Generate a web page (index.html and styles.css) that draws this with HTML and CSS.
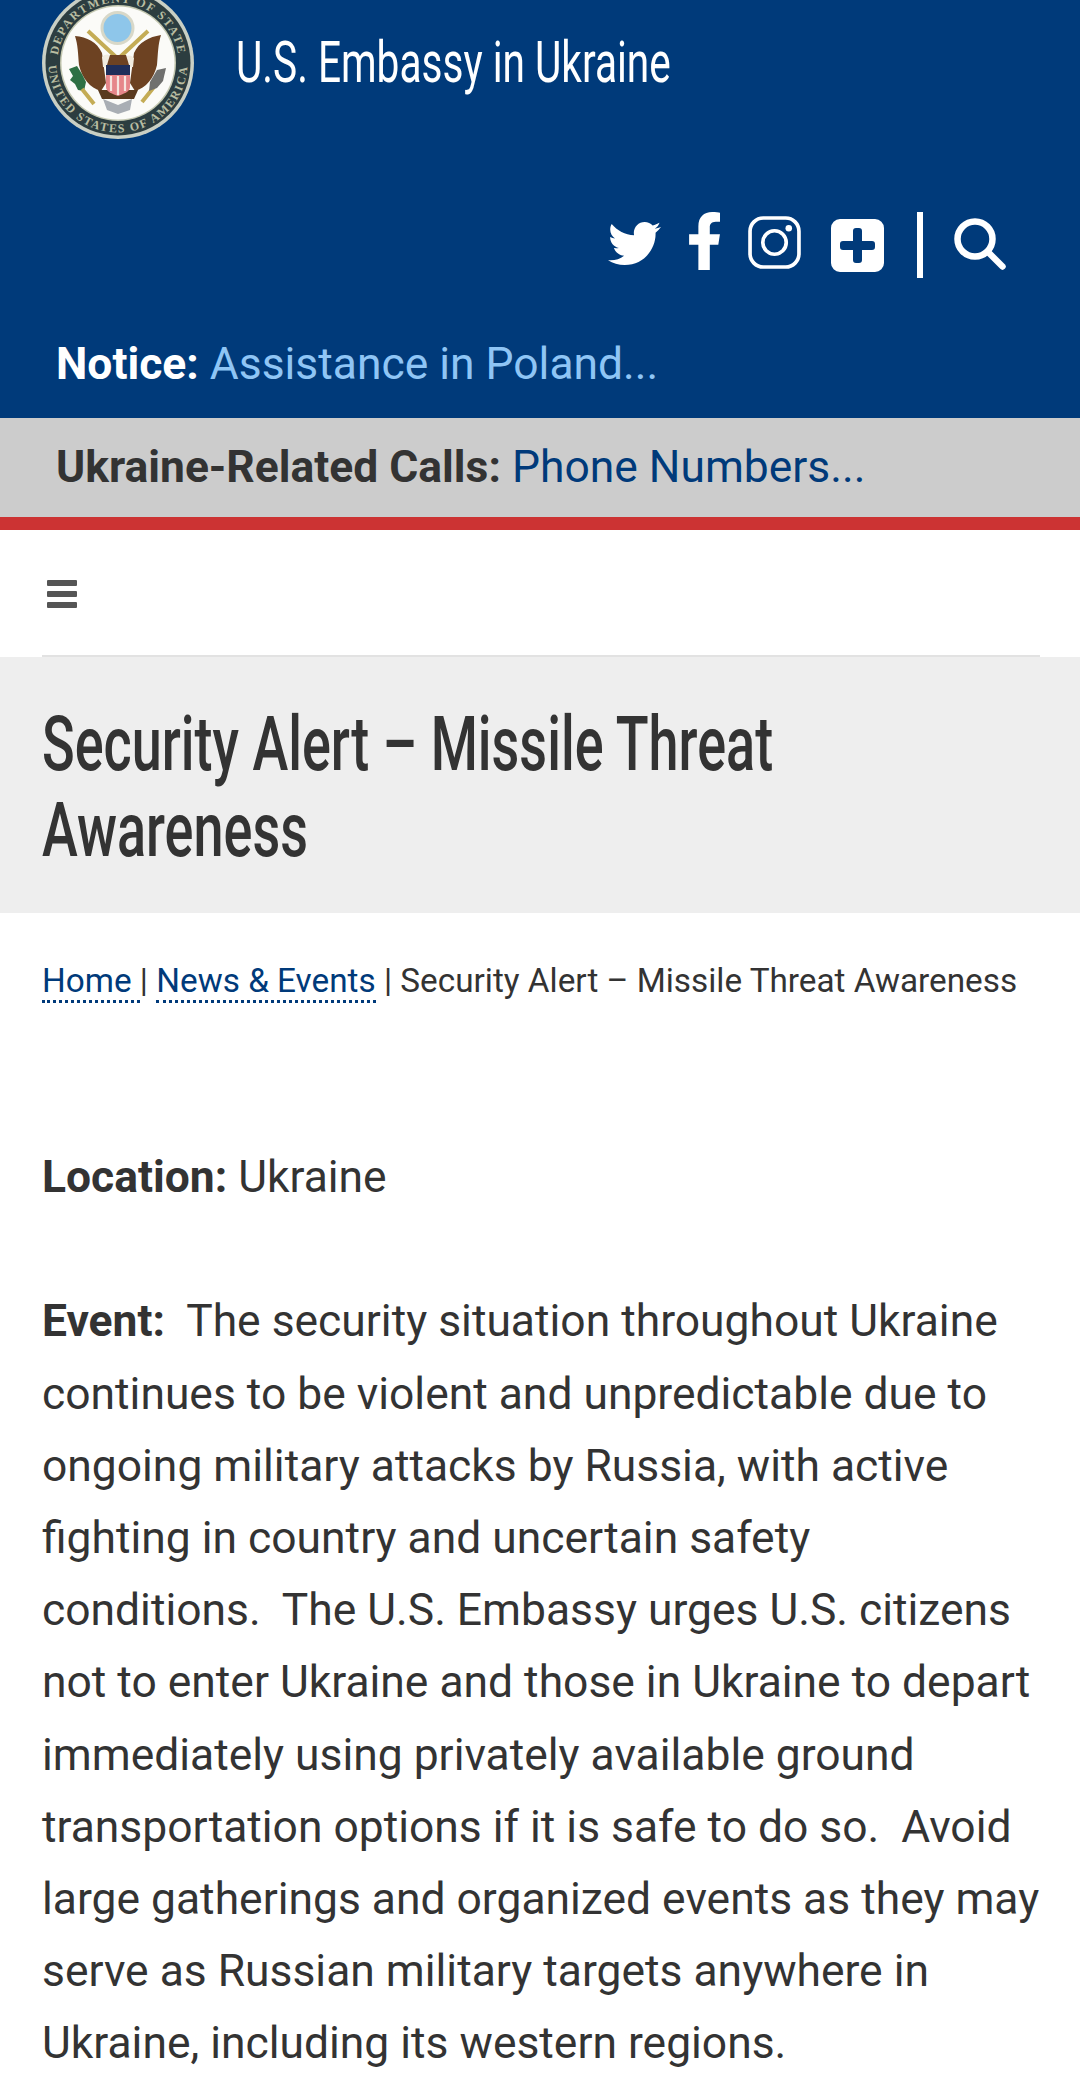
FILE: index.html
```html
<!DOCTYPE html>
<html lang="en">
<head>
<meta charset="utf-8">
<title>Security Alert – Missile Threat Awareness</title>
<link rel="stylesheet" href="styles.css">
</head>
<body>
<header class="site-header">
  <div class="brand">
    <svg class="seal" viewBox="0 0 152 152" aria-hidden="true">
      <defs>
        <path id="arcTop" d="M15.5 76 A60.5 60.5 0 0 1 136.5 76"/>
        <path id="arcBottom" d="M6.5 76 A69.5 69.5 0 0 0 145.5 76"/>
      </defs>
      <circle cx="76" cy="76" r="76" fill="#c9cfc4"/>
      <circle cx="76" cy="76" r="72.5" fill="#2c3d40"/>
      <circle cx="76" cy="76" r="58" fill="#c4c8b0"/>
      <circle cx="76" cy="76" r="56.5" fill="#fbfbf8"/>
      <text class="seal-text"><textPath href="#arcTop" startOffset="50%" text-anchor="middle">DEPARTMENT OF STATE</textPath></text>
      <text class="seal-text"><textPath href="#arcBottom" startOffset="50%" text-anchor="middle">UNITED STATES OF AMERICA</textPath></text>
      <circle cx="75.5" cy="41" r="15.5" fill="#8ec6ea" stroke="#d8d8c8" stroke-width="3"/>
      <path class="gold" d="M46 44l28 26M106 44L78 70"/>
      <path fill="#6d4222" d="M33 49c12 1 22 6 27 17l4 30-5 8c-11-3-19-13-22-26-1-11-1-20-4-29z"/>
      <path fill="#6d4222" d="M119 48c-12 2-22 7-27 18l-4 30 5 8c11-3 19-13 22-26 1-11 1-21 4-30z"/>
      <path fill="#5a3a1e" d="M56 103h40l-4 9H60z"/>
      <path fill="#f1ece0" d="M60 70c4-4 8-3 10 2l-3 8h-6zM92 71c-4-4-8-3-10 2l3 7h6z"/>
      <path fill="#6d4222" d="M68 68h16l3 10H65z"/>
      <path fill="#1f2e5a" d="M64 78h24v10H64z"/>
      <path fill="#e6868a" d="M64 88h24v12c0 5-7 7-12 9-5-2-12-4-12-9z"/>
      <path d="M69 89v15M76 89v19M83 89v15" stroke="#f6e4df" stroke-width="2.2"/>
      <path fill="#2e7044" d="M27 82l8-3 5 8 4 8-2 9-6-1-3-6-5-4 3-4z"/>
      <path class="gold" d="M40 102l12 15M112 100l-12 15"/>
      <path fill="#70706e" d="M124 81l-3 13-6 7-8 3 1-9 7-12z"/>
      <path fill="#a9aeb4" d="M61 112l15 6 14-6-2 11-12 4-11-4z"/>
    </svg>
    <div class="site-name">U.S. Embassy in Ukraine</div>
  </div>
  <div class="social">
    <svg class="ico ico-tw" viewBox="0 0 512 512" aria-hidden="true"><path d="M459.37 151.716c.325 4.548.325 9.097.325 13.645 0 138.72-105.583 298.558-298.558 298.558-59.452 0-114.68-17.219-161.137-47.106 8.447.974 16.568 1.299 25.34 1.299 49.055 0 94.213-16.568 130.274-44.832-46.132-.975-84.792-31.188-98.112-72.772 6.498.974 12.995 1.624 19.818 1.624 9.421 0 18.843-1.3 27.614-3.573-48.081-9.747-84.143-51.98-84.143-102.985v-1.299c13.969 7.797 30.214 12.67 47.431 13.319-28.264-18.843-46.781-51.005-46.781-87.391 0-19.492 5.197-37.36 14.294-52.954 51.655 63.675 129.3 105.258 216.365 109.807-1.624-7.797-2.599-15.918-2.599-24.04 0-57.828 46.782-104.934 104.934-104.934 30.213 0 57.502 12.67 76.67 33.137 23.715-4.548 46.456-13.32 66.599-25.34-7.798 24.366-24.366 44.833-46.132 57.827 21.117-2.273 41.584-8.122 60.426-16.243-14.292 20.791-32.161 39.308-52.628 54.253z"/></svg>
    <svg class="ico ico-fb" viewBox="22 0 272 512" preserveAspectRatio="none" aria-hidden="true"><path d="M279.14 288l14.22-92.66h-88.91v-60.13c0-25.35 12.42-50.06 52.24-50.06h40.42V6.26S260.43 0 225.36 0c-73.22 0-121.08 44.38-121.08 124.72v70.62H22.89V288h81.39v224h100.17V288z"/></svg>
    <svg class="ico ico-ig" viewBox="0 0 52 52" aria-hidden="true"><rect x="2" y="2" width="48" height="48" rx="13" fill="none" stroke="#fff" stroke-width="3.6"/><circle cx="26" cy="26" r="11.5" fill="none" stroke="#fff" stroke-width="3.6"/><circle cx="40" cy="12" r="3.2"/></svg>
    <svg class="ico ico-plus" viewBox="0 0 53 53" aria-hidden="true"><path fill-rule="evenodd" d="M9 0h35a9 9 0 0 1 9 9v35a9 9 0 0 1-9 9H9a9 9 0 0 1-9-9V9a9 9 0 0 1 9-9zM22 12v10H12a3 3 0 0 0-3 3v3a3 3 0 0 0 3 3h10v10a3 3 0 0 0 3 3h3a3 3 0 0 0 3-3V31h10a3 3 0 0 0 3-3v-3a3 3 0 0 0-3-3H31V12a3 3 0 0 0-3-3h-3a3 3 0 0 0-3 3z"/></svg>
    <span class="sep"></span>
    <svg class="ico ico-search" viewBox="0 0 52 52" aria-hidden="true"><circle cx="21" cy="21" r="17.5" fill="none" stroke="#fff" stroke-width="6.5"/><path d="M34.5 34.5L48.5 48.5" stroke="#fff" stroke-width="6.4" stroke-linecap="round"/></svg>
  </div>
  <p class="notice"><strong>Notice:</strong> <a href="#">Assistance in Poland...</a></p>
</header>
<div class="calls">
  <p class="calls-text"><strong>Ukraine-Related Calls:</strong> <a href="#">Phone Numbers...</a></p>
</div>
<nav class="menu-bar">
  <div class="menu-inner">
    <span class="burger"><i></i><i></i><i></i></span>
  </div>
</nav>
<div class="page-title">
  <h1>Security Alert – Missile Threat Awareness</h1>
</div>
<main class="content">
  <p class="crumbs"><a href="#">Home&nbsp;</a><span class="pipe">|</span> <a href="#">News &amp; Events</a> <span class="pipe">|</span> Security Alert – Missile Threat Awareness</p>
  <p class="para"><strong>Location:</strong> Ukraine</p>
  <p class="para"><strong>Event:</strong>&nbsp; The security situation throughout Ukraine continues to be violent and unpredictable due to ongoing military attacks by Russia, with active fighting in country and uncertain safety conditions.&nbsp; The U.S. Embassy urges U.S. citizens not to enter Ukraine and those in Ukraine to depart immediately using privately available ground transportation options if it is safe to do so.&nbsp; Avoid large gatherings and organized events as they may serve as Russian military targets anywhere in Ukraine, including its western regions.</p>
</main>
</body>
</html>
```
FILE: styles.css
```css
* { box-sizing: border-box; }
html, body { margin: 0; padding: 0; }
body {
  width: 1080px;
  height: 2086px;
  overflow: hidden;
  background: #fff;
  color: #333;
  font-family: Roboto, "Liberation Sans", sans-serif;
}
a { text-decoration: none; }
p { margin: 0; }

.site-header {
  height: 418px;
  background: #003a7a;
  color: #fff;
  overflow: hidden;
}
.brand {
  display: flex;
  align-items: flex-start;
  padding-left: 42px;
  height: 212px;
}
.seal { width: 152px; height: 152px; margin-top: -13px; flex: none; }
.seal-text { font: 700 12px "Liberation Serif", serif; fill: #b9bda2; letter-spacing: 1.6px; }
.gold { fill: none; stroke: #c4ac55; stroke-width: 4; }
.site-name {
  margin: 28px 0 0 42px;
  font: 400 58px/68px Roboto, sans-serif;
  white-space: nowrap;
  flex: none;
  transform: scaleX(.70);
  transform-origin: left center;
}
.social {
  display: flex;
  align-items: center;
  height: 66px;
  padding-left: 608px;
}
.ico { display: block; fill: #fff; flex: none; }
.ico-tw { width: 53px; height: 53px; margin-bottom: 3px; }
.ico-fb { width: 31px; height: 58px; margin-left: 28px; margin-bottom: 8px; }
.ico-ig { width: 53px; height: 53px; margin-left: 28px; margin-bottom: 5px; }
.ico-plus { width: 53px; height: 53px; margin-left: 30px; margin-top: 1px; }
.sep { width: 6px; height: 66px; background: #fff; margin-left: 33px; }
.ico-search { width: 52px; height: 52px; margin-left: 31px; margin-bottom: 2px; }
.notice {
  margin-top: 60px;
  padding-left: 56px;
  font-size: 44.4px;
  line-height: 52px;
}
.notice strong { font-weight: 700; }
.notice a { color: #8fc5f5; }

.calls {
  height: 112px;
  background: #cccccc;
  border-bottom: 13px solid #cc3333;
  padding: 23px 0 0 56px;
}
.calls-text { font-size: 44.4px; line-height: 52px; white-space: nowrap; }
.calls-text a { color: #003a7a; }

.menu-inner {
  height: 127px;
  margin: 0 40px 0 42px;
  padding: 50px 0 0 5px;
  border-bottom: 2px solid #e2e2e2;
}
.burger { display: flex; flex-direction: column; gap: 5px; width: 30px; }
.burger i { display: block; height: 6px; border-radius: 1px; background: #555; }

.page-title {
  height: 256px;
  background: #eeeeee;
  padding: 45px 42px 0;
  overflow: hidden;
}
.page-title h1 {
  margin: 0;
  width: 1390px;
  font: 500 76px/85.5px Roboto, sans-serif;
  color: #333;
  transform: scaleX(.71);
  transform-origin: left top;
}

.content { padding: 0 30px 0 42px; }
.crumbs {
  margin-top: 45px;
  font-size: 33.3px;
  line-height: 46px;
  white-space: nowrap;
}
.crumbs a {
  color: #003a7a;
  border-bottom: 3px dotted #003a7a;
}
.crumbs .pipe { color: #333; }
.para {
  font-size: 44.4px;
  line-height: 72.2px;
  margin-top: 72.2px;
}
.crumbs + .para { margin-top: 137px; }
```
